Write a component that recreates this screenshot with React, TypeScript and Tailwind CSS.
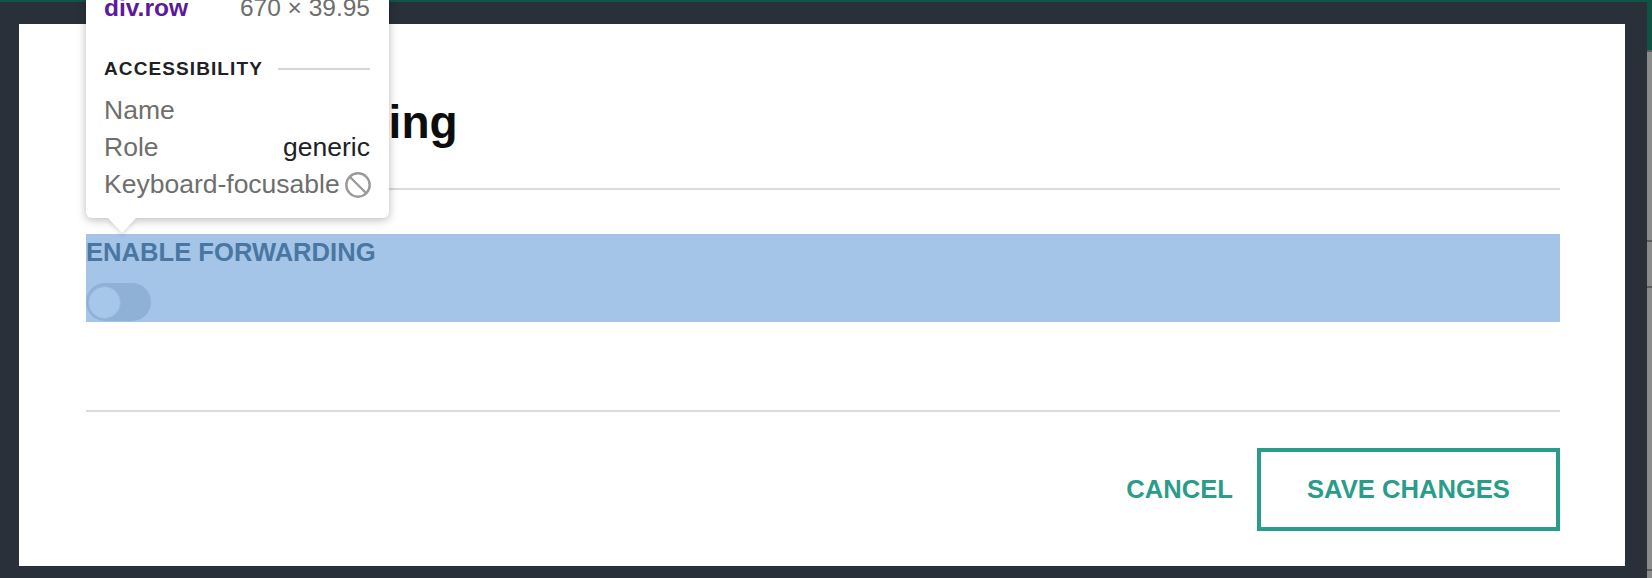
import { Ban } from "lucide-react";

const tealText = "text-[25.6px] font-bold leading-none text-[#2a9d8a]";
const rowText = "flex items-center justify-between h-[37px] text-[26.5px] leading-[37px]";

const Inspector = () => {
  return (
    <div className="absolute left-[86px] top-[-15px] w-[303px] bg-white rounded-[6px] shadow-[0_2px_10px_rgba(0,0,0,0.28)] pl-[18px] pr-[19px] pt-[8px] pb-[15px]">
      <div className="flex justify-between items-baseline h-[30px] leading-[30px] text-[24.5px]">
        <span className="font-bold text-[#5b1a9e]">div.row</span>
        <span className="text-[#6e6e6e]">670 × 39.95</span>
      </div>
      <div className="flex items-center h-[24px] mt-[34px]">
        <span className="text-[19px] leading-[24px] font-bold tracking-[1.1px] text-[#202124]">
          ACCESSIBILITY
        </span>
        <div className="flex-1 h-[2px] bg-[#d6d6d6] ml-[15px]" />
      </div>
      <div className="mt-[11px] text-[#6e6e6e]">
        <div className={rowText}>
          <span>Name</span>
        </div>
        <div className={rowText}>
          <span>Role</span>
          <span className="text-[#202124]">generic</span>
        </div>
        <div className={rowText}>
          <span>Keyboard-focusable</span>
          <Ban size={28} strokeWidth={2.1} className="text-[#9a9a9a] -mr-[2px]" />
        </div>
      </div>
      <div className="absolute left-[22px] top-full w-0 h-0 border-l-[14px] border-r-[14px] border-t-[15px] border-l-transparent border-r-transparent border-t-white [filter:drop-shadow(0_3px_2px_rgba(0,0,0,0.12))]" />
    </div>
  );
};

const Toggle = () => (
  <div className="w-[65px] h-[38px] rounded-full bg-[#8fb1d6] pl-[2px] pt-[3px]">
    <div className="w-[33px] h-[33px] rounded-full bg-[#a6c7e9] border border-[#97b8dc]" />
  </div>
);

export default function App() {
  return (
    <div className="relative w-[1652px] h-[578px] bg-[#29303a] overflow-hidden flex font-['Liberation_Sans',Arial,sans-serif]">
      <div className="flex-1 flex flex-col">
        <div className="h-[2px] bg-[#0e5646]" />
        <div className="pl-[19px] pt-[22px]">
          <div className="w-[1606px] h-[542px] bg-white pl-[67px] pr-[65px] pt-[75px] flex flex-col">
            <h1 className="text-[46px] font-bold leading-none text-[#0d0d0d] [word-spacing:24px]">
              Call Forwarding
            </h1>
            <div className="h-[2px] bg-[#dadada] mt-[43px]" />
            <div className="mt-[44px] h-[88px] bg-[#a4c5e8] pt-[6px]">
              <div className="text-[25.6px] font-bold leading-none text-[#4a77a2]">
                ENABLE FORWARDING
              </div>
              <div className="mt-[17px]">
                <Toggle />
              </div>
            </div>
            <div className="h-[2px] bg-[#dadada] mt-[88px]" />
            <div className="mt-[36px] flex justify-end items-center gap-[24px]">
              <button className={tealText}>CANCEL</button>
              <button className={`w-[303px] h-[83px] border-[4px] border-[#2a9d8a] flex items-center justify-center ${tealText}`}>
                SAVE CHANGES
              </button>
            </div>
          </div>
        </div>
      </div>
      <div className="w-[5px] flex flex-col bg-[#8b8b8b]">
        <div className="h-[50px] bg-[#0e5444]" />
        <div className="h-[2px] bg-[#5c5c5c]" />
        <div className="h-[188px]" />
        <div className="h-[2px] bg-[#5c5c5c]" />
        <div className="h-[44px]" />
        <div className="h-[2px] bg-[#5c5c5c]" />
        <div className="h-[281px]" />
        <div className="h-[2px] bg-[#5c5c5c]" />
      </div>
      <Inspector />
    </div>
  );
}
